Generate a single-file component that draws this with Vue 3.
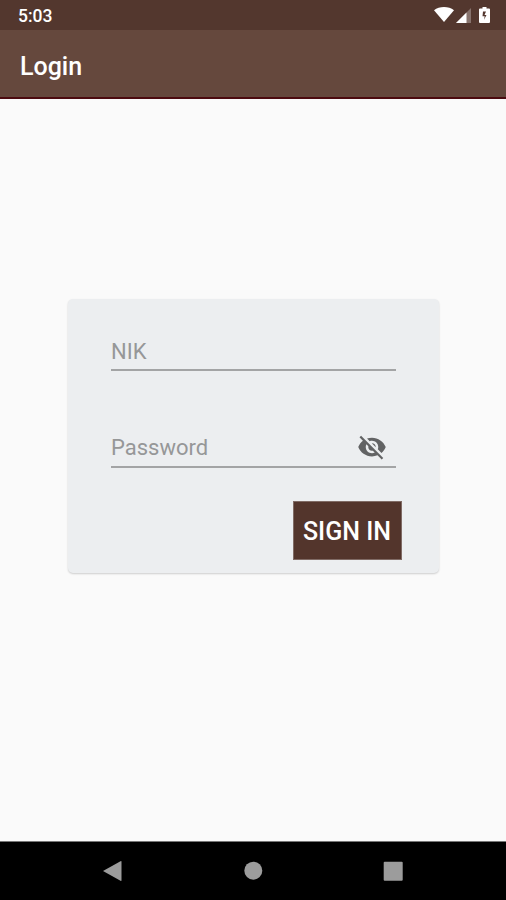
<template>
  <div class="screen">
    <!-- Status bar -->
    <div class="status-bar">
      <span class="status-time">5:03</span>
      <div class="status-icons">
        <svg class="icon-wifi" viewBox="0 0 20 15">
          <path d="M0 3.2C2.8 1 6.2 0 10 0s7.2 1 10 3.2L10 15z" />
        </svg>
        <svg class="icon-signal" viewBox="0 0 15 15">
          <path d="M15 0v15H0z" opacity="0.3" />
          <path d="M10.5 4.5V15H0z" />
        </svg>
        <svg class="icon-battery" viewBox="0 0 11 16">
          <path
            fill-rule="evenodd"
            d="M3.5 0h4v1.6H10a1 1 0 0 1 1 1V15a1 1 0 0 1-1 1H1a1 1 0 0 1-1-1V2.6a1 1 0 0 1 1-1h2.5zM4 4.5L3.5 9.200H5.700L5 12.800L7.500 8H5.500L7 4.500z"
          />
        </svg>
      </div>
    </div>

    <!-- App bar -->
    <header class="app-bar">
      <h1 class="app-bar-title">Login</h1>
    </header>

    <main class="content">
      <form class="card" @submit.prevent>
        <div class="field">
          <label v-if="!nik" for="nik" class="field-hint">NIK</label>
          <input id="nik" v-model="nik" type="text" class="field-input">
        </div>
        <div class="field field-password">
          <label v-if="!password" for="password" class="field-hint">Password</label>
          <input
            id="password"
            v-model="password"
            :type="showPassword ? 'text' : 'password'"
            class="field-input"
          >
          <button
            type="button"
            class="field-toggle"
            aria-label="Toggle password visibility"
            @click="showPassword = !showPassword"
          >
            <svg viewBox="0 0 24 24">
              <path d="M12 7c2.76 0 5 2.24 5 5 0 .65-.13 1.26-.36 1.83l2.92 2.92c1.51-1.26 2.7-2.89 3.43-4.75-1.73-4.39-6-7.5-11-7.5-1.4 0-2.74.25-3.98.7l2.16 2.16C10.74 7.13 11.35 7 12 7zM2 4.27l2.28 2.28.46.46C3.08 8.3 1.78 10.02 1 12c1.73 4.39 6 7.5 11 7.5 1.55 0 3.03-.3 4.38-.84l.42.42L19.73 22 21 20.73 3.27 3 2 4.27zM7.53 9.8l1.55 1.55c-.05.21-.08.43-.08.65 0 1.66 1.34 3 3 3 .22 0 .44-.03.65-.08l1.55 1.55c-.67.33-1.41.53-2.2.53-2.76 0-5-2.24-5-5 0-.79.2-1.53.53-2.2zm4.31-.78l3.15 3.15.02-.16c0-1.66-1.34-3-3-3l-.17.01z" />
            </svg>
          </button>
        </div>
        <button type="submit" class="sign-in">SIGN IN</button>
      </form>
    </main>

    <!-- System navigation -->
    <nav class="nav-bar">
      <svg viewBox="0 0 24 24"><path d="M2 12L19.500 2.200Q20.500 1.700 20.500 2.700V21.300Q20.500 22.300 19.500 21.800z" /></svg>
      <svg viewBox="0 0 24 24"><circle cx="12.300" cy="11.700" r="9" /></svg>
      <svg viewBox="0 0 24 24"><rect x="2.700" y="2.700" width="19" height="19" rx="1" /></svg>
    </nav>
  </div>
</template>

<script setup>
import { ref } from 'vue';

const nik = ref('');
const password = ref('');
const showPassword = ref(false);
</script>

<style>
body {
  margin: 0;
}
</style>

<style scoped>
.screen {
  display: flex;
  flex-direction: column;
  height: 900px;
  background: #fafafa;
  font-family: Roboto, sans-serif;
  overflow: hidden;
}

.status-bar {
  display: flex;
  flex: none;
  justify-content: space-between;
  box-sizing: border-box;
  height: 30px;
  padding: 0 16px 0 18px;
  background: #53372e;
  color: #fff;
}

.status-time {
  font-size: 17.5px;
  font-weight: 500;
  line-height: 32px;
}

.status-icons {
  display: flex;
  align-items: flex-start;
  padding-top: 7px;
  fill: #fff;
}

.icon-wifi {
  width: 20px;
  height: 15px;
}

.icon-signal {
  width: 15px;
  height: 15px;
  margin: 1px 8px 0 2px;
}

.icon-battery {
  width: 11px;
  height: 16px;
}

.app-bar {
  flex: none;
  box-sizing: border-box;
  height: 69px;
  padding-left: 20px;
  background: #65483d;
  border-bottom: 2px solid #4c0b10;
}

.app-bar-title {
  margin: 0;
  color: #fff;
  font-size: 25px;
  font-weight: 500;
  line-height: 73px;
}

.content {
  flex: 1;
  padding: 200px 67px 0 68px;
}

.card {
  display: flex;
  flex-direction: column;
  box-sizing: border-box;
  height: 274px;
  padding: 32px 43px 0;
  border-radius: 5px;
  background: #eceef0;
  box-shadow: 0 1px 2px rgba(0, 0, 0, 0.18);
}

.field {
  display: grid;
  grid-template-columns: 1fr auto;
  box-sizing: border-box;
  height: 40px;
  border-bottom: 2px solid #a3a4a5;
}

.field-password {
  margin-top: 57px;
}

.field-hint,
.field-input {
  grid-row: 1;
  grid-column: 1;
  font-size: 22px;
  line-height: 42px;
}

.field-hint {
  z-index: 1;
  color: #969798;
  pointer-events: none;
}

.field-password .field-hint {
  line-height: 39px;
}

.field-input {
  box-sizing: border-box;
  width: 100%;
  min-width: 0;
  height: 38px;
  padding: 0;
  border: 0;
  outline: 0;
  background: transparent;
  color: #212121;
  font-family: inherit;
}

.field-toggle {
  grid-row: 1;
  grid-column: 2;
  width: 30px;
  height: 30px;
  margin: 4px 9px 0 0;
  padding: 0;
  border: 0;
  background: transparent;
}

.field-toggle svg {
  display: block;
  width: 30px;
  height: 30px;
  fill: #626364;
}

.sign-in {
  align-self: flex-end;
  box-sizing: border-box;
  width: 109px;
  height: 59px;
  margin: 33px -5.5px 0 0;
  padding: 3px 0 0;
  border: 1px solid #806b65;
  background: #53352c;
  color: #fff;
  font-family: inherit;
  font-size: 25px;
  font-weight: 500;
  line-height: 54px;
  white-space: nowrap;
}

.nav-bar {
  display: flex;
  flex: none;
  justify-content: space-between;
  box-sizing: border-box;
  height: 59px;
  padding: 17px 101px 0;
  border-top: 1px solid #777;
  background: #000;
}

.nav-bar svg {
  width: 24px;
  height: 24px;
  fill: #9c9c9c;
}
</style>
